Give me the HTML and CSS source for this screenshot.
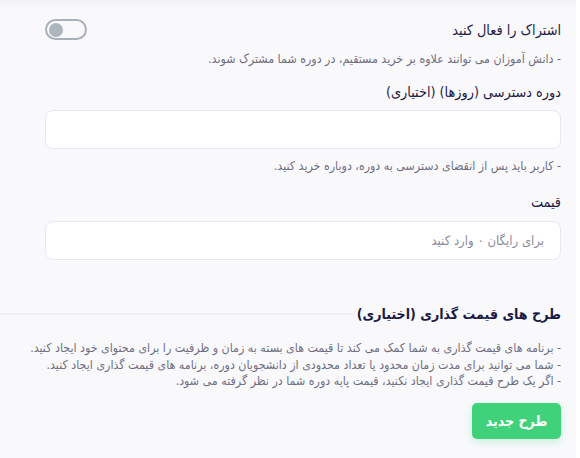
FILE: index.html
```html
<!DOCTYPE html>
<html lang="fa" dir="rtl">

<head>
    <meta charset="UTF-8">
    <meta name="viewport" content="width=device-width, initial-scale=1.0">
    <title>تنظیمات قیمت</title>
    <link rel="stylesheet" href="styles.css">
</head>

<body>

    <div class="page">
        <div class="field-row">
            <div class="field-title">اشتراک را فعال کنید</div>
            <label class="switch">
                <input type="checkbox">
                <span class="knob"></span>
            </label>
        </div>
        <div class="hint">- دانش آموزان می توانند علاوه بر خرید مستقیم، در دوره شما مشترک شوند.</div>

        <label class="field-label" for="access-days">دوره دسترسی (روزها) (اختیاری)</label>
        <input class="text-input" id="access-days" type="text">
        <div class="hint hint-after">- کاربر باید پس از انقضای دسترسی به دوره، دوباره خرید کنید.</div>

        <label class="field-label price-label" for="price">قیمت</label>
        <input class="text-input price-input" id="price" type="text" placeholder="برای رایگان ۰ وارد کنید">

        <div class="plans">
            <div class="plans-head">
                <h3>طرح های قیمت گذاری (اختیاری)</h3>
                <span class="plans-line"></span>
            </div>
            <ul class="plans-info">
                <li>- برنامه های قیمت گذاری به شما کمک می کند تا قیمت های بسته به زمان و ظرفیت را برای محتوای خود ایجاد کنید.</li>
                <li>- شما می توانید برای مدت زمان محدود یا تعداد محدودی از دانشجویان دوره، برنامه های قیمت گذاری ایجاد کنید.</li>
                <li>- اگر یک طرح قیمت گذاری ایجاد نکنید، قیمت پایه دوره شما در نظر گرفته می شود.</li>
            </ul>
            <button class="btn-new" type="button">طرح جدید</button>
        </div>
    </div>

</body>

</html>
```

FILE: styles.css
```css
body {
    margin: 0;
    background: #ffffff;
    font-family: "DejaVu Sans Condensed", "DejaVu Sans", sans-serif;
}

.page {
    width: 531px;
    height: 458px;
    margin-right: 4px;
    padding: 0 15px 0 30px;
    background: #f9f9fc;
    box-shadow: inset 0 10px 8px -8px #efeff3;
    color: #1c1a45;
    overflow: hidden;
}

.field-row {
    display: flex;
    justify-content: space-between;
    align-items: center;
    padding-top: 19px;
}

.field-title {
    font-size: 14.3px;
}

.switch {
    position: relative;
    display: inline-block;
    width: 38px;
    height: 17px;
    border: 2px solid #a8b0b8;
    border-radius: 12px;
    margin-left: 15px;
}

.switch input {
    display: none;
}

/* دایره داخل کلید */
.knob {
    position: absolute;
    top: 1.5px;
    left: 2px;
    width: 14px;
    height: 14px;
    border-radius: 50%;
    background: #adb5bd;
}

.hint {
    font-size: 12.3px;
    color: #6e6e80;
    margin-top: 12px;
}

.hint-after {
    margin-top: 10px;
}

.field-label {
    display: block;
    font-size: 14.3px;
    margin-top: 18px;
}

.price-label {
    margin-top: 21px;
}

.text-input {
    display: block;
    box-sizing: border-box;
    width: 516px;
    height: 39px;
    margin: 10px 0 0 auto;
    padding: 0 16px;
    border: 1px solid #e8e8ee;
    border-radius: 8px;
    background: #ffffff;
    font-family: inherit;
    font-size: 13px;
    color: #1c1a45;
}

.price-input {
    margin-top: 11px;
}

.text-input::placeholder {
    color: #8b8b99;
}

.plans {
    margin-left: -30px;
    margin-top: 46px;
}

.plans-head {
    display: flex;
    align-items: center;
}

.plans-head h3 {
    margin: 0;
    font-size: 14.1px;
    font-weight: bold;
    white-space: nowrap;
}

.plans-line {
    flex: 1;
    height: 2px;
    margin-right: 3px;
    background: #eeeef3;
}

.plans-info {
    list-style: none;
    margin: 18px 0 0;
    padding: 0;
    font-size: 12.3px;
    line-height: 16.5px;
    color: #6e6e80;
}

.btn-new {
    display: block;
    margin: 13px 0 0 auto;
    width: 89px;
    height: 36px;
    border: none;
    border-radius: 5px;
    background: #40d27a;
    color: #ffffff;
    font-family: inherit;
    font-size: 14px;
    font-weight: bold;
    box-shadow: 0 3px 8px rgba(64, 210, 122, 0.25);
}
```
